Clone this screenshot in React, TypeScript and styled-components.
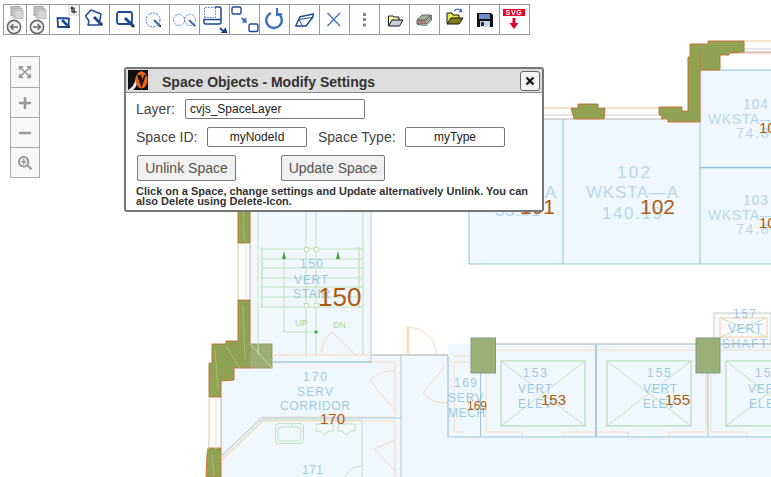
import React from "react";
import styled, { createGlobalStyle } from "styled-components";
import { FaExpandArrowsAlt, FaPlus, FaMinus, FaSearchPlus } from "react-icons/fa";

const GlobalStyle = createGlobalStyle`
  html, body { margin: 0; padding: 0; background: #fff; overflow: hidden; }
  body { font-family: "Liberation Sans", Arial, sans-serif; }
  * { box-sizing: border-box; }
`;

const Page = styled.div`
  position: relative;
  width: 771px;
  height: 477px;
  overflow: hidden;
  padding: 4px 0 0 3px;
`;

const Toolbar = styled.div`
  position: relative;
  display: inline-flex;
  height: 31px;
  border: 1px solid #999;
  border-right: 0;
  background: #fff;
`;

const Tool = styled.div<{ $narrow?: boolean }>`
  width: ${(p) => (p.$narrow ? 23 : 30)}px;
  height: 29px;
  border-right: 1px solid #999;
  flex: none;
  svg { display: block; }
`;

const PlanCanvas = styled.svg`
  position: absolute;
  left: 0;
  top: 0;
`;

const CadText = styled.text<{ $size?: number }>`
  font-family: "Liberation Sans", Arial, sans-serif;
  font-size: ${(p) => p.$size ?? 12}px;
  fill: ${(p) => ((p.$size ?? 12) > 13 ? "#a2cde6" : "#6eb3d9")};
  fill-opacity: ${(p) => ((p.$size ?? 12) > 13 ? 0.75 : 0.68)};
`;

const RoomNumber = styled.text<{ $size: number }>`
  font-family: "Liberation Sans", Arial, sans-serif;
  font-size: ${(p) => p.$size}px;
  fill: #b05a10;
`;

const FixtureText = styled.text`
  font-family: "Liberation Sans", Arial, sans-serif;
  font-size: 9px;
  fill: #a7d79a;
`;

const SvgBadgeText = styled.text`
  font-family: "Liberation Sans", Arial, sans-serif;
  font-size: 7px;
  font-weight: bold;
  letter-spacing: 0.8px;
  fill: #fff;
`;

const ZoomBar = styled.div`
  position: absolute;
  left: 10px;
  top: 56px;
  width: 30px;
  border: 1px solid #aaa;
  background: #f8f8f8;
`;

const ZoomBtn = styled.div`
  height: 30px;
  display: flex;
  align-items: center;
  justify-content: center;
  color: #999;
  font-size: 14px;
  & + & { border-top: 1px solid #aaa; }
`;

const Dialog = styled.div`
  position: absolute;
  left: 124px;
  top: 67px;
  width: 420px;
  height: 145px;
  border: 2px solid #777;
  border-radius: 3px;
  background: #fff;
  color: #444;
`;

const DialogHeader = styled.div`
  height: 24px;
  background: #ddd;
  border-bottom: 1px solid #888;
  display: flex;
  align-items: center;
  padding: 0 2px 0 2px;
`;

const Logo = styled.svg`
  flex: none;
  margin-top: -2px;
`;

const Title = styled.div`
  flex: 1;
  margin-left: 14px;
  margin-top: 3px;
  font-size: 14px;
  font-weight: bold;
  color: #333;
`;

const CloseBtn = styled.div`
  width: 20px;
  height: 20px;
  margin-top: 1px;
  border: 1px solid #666;
  border-radius: 3px;
  background: #f4f4f4;
  display: flex;
  align-items: center;
  justify-content: center;
`;

const DialogBody = styled.div`
  padding: 6px 0 0 10px;
`;

const FieldRow = styled.div`
  display: flex;
  align-items: center;
  height: 19px;
  margin-bottom: 9px;
  font-size: 14px;
`;

const FieldLabel = styled.span<{ $w: number; $gap?: number }>`
  width: ${(p) => p.$w}px;
  margin-left: ${(p) => p.$gap ?? 0}px;
  flex: none;
`;

const FieldInput = styled.div<{ $w: number; $center?: boolean }>`
  width: ${(p) => p.$w}px;
  height: 20px;
  flex: none;
  border: 1px solid #777;
  border-radius: 2px;
  font-size: 12px;
  line-height: 18px;
  color: #222;
  padding: 0 4px;
  text-align: ${(p) => (p.$center ? "center" : "left")};
`;

const ButtonRow = styled.div`
  display: flex;
  gap: 45px;
  margin-left: 1px;
`;

const ActionBtn = styled.div<{ $w: number }>`
  width: ${(p) => p.$w}px;
  height: 26px;
  border: 1px solid #777;
  border-radius: 2px;
  background: #f0f0f0;
  color: #555;
  font-size: 14px;
  line-height: 25px;
  text-align: center;
`;

const Note = styled.div`
  margin-top: 5px;
  width: 400px;
  font-size: 11px;
  line-height: 10px;
  font-weight: bold;
  color: #333;
`;

const NAVY = "#1d4a94";
const BLUE = "#3f72b8";

const Ico = ({ w = 29, children }: { w?: number; children: React.ReactNode }) => (
  <svg width={w} height={29} viewBox={`0 0 ${w} 29`}>
    {children}
  </svg>
);

const Pencil = ({ x, y, s = 1, c = NAVY }: { x: number; y: number; s?: number; c?: string }) => (
  <g transform={`translate(${x} ${y}) scale(${s})`}>
    <path d="M0 0 L7 7" stroke={c} strokeWidth={2.6} />
    <path d="M5.5 7.5 L8 8 L7.5 5.5Z" fill="#222" />
  </g>
);

const PagesBack = ({ dir }: { dir: "l" | "r" }) => (
  <Ico w={22}>
    <rect x="7" y="1.5" width="9" height="9" fill="#c4c4c4" stroke="#a8a8a8" />
    <rect x="9" y="3.5" width="9" height="9" fill="#d0d0d0" stroke="#b4b4b4" />
    <rect x="11" y="5.5" width="8" height="8" fill="#d8d8d8" stroke="#bbb" />
    <circle cx="10" cy="22" r="6.6" fill="#f4f4f4" stroke="#666" strokeWidth="1.6" />
    {dir === "l" ? (
      <path d="M14 22 H6.5 M9.5 19 L6.5 22 L9.5 25" fill="none" stroke="#666" strokeWidth="1.3" />
    ) : (
      <path d="M6 22 H13.5 M10.5 19 L13.5 22 L10.5 25" fill="none" stroke="#666" strokeWidth="1.3" />
    )}
  </Ico>
);

const icons: React.ReactNode[] = [
  <PagesBack dir="l" />,
  <PagesBack dir="r" />,
  <Ico>
    <rect x="19" y="0" width="10" height="10" fill="#fff" stroke="#ccc" />
    <path d="M22 1.5 V7 H27 M24 8.5 V3 H20.5" fill="none" stroke="#111" strokeWidth="1.2" />
    <path d="M7.5 13 L19 13.5 L18.5 22 L8 22Z" fill="#fff" stroke={NAVY} strokeWidth="1.8" strokeLinejoin="round" />
    <Pencil x={12} y={15} />
  </Ico>,
  <Ico>
    <path d="M5.5 11 L9 16 L8 20 L19 20 L21 9 L11 5Z" fill="#fff" stroke={NAVY} strokeWidth="1.5" strokeLinejoin="round" />
    <Pencil x={14} y={12} s={1.1} />
  </Ico>,
  <Ico>
    <rect x="7" y="7" width="15" height="12" rx="2" fill="#fff" stroke={NAVY} strokeWidth="1.8" />
    <Pencil x={15} y={13} s={1.2} />
  </Ico>,
  <Ico>
    <circle cx="13" cy="15" r="7" fill="#fff" stroke={BLUE} strokeWidth="1" strokeDasharray="2 1" />
    <Pencil x={14} y={15} s={0.9} c={BLUE} />
  </Ico>,
  <Ico>
    <circle cx="9" cy="15" r="5.5" fill="none" stroke={BLUE} strokeOpacity=".8" strokeWidth="1" strokeDasharray="2 1" />
    <circle cx="20" cy="15" r="5.5" fill="none" stroke={BLUE} strokeOpacity=".8" strokeWidth="1" strokeDasharray="2 1" />
    <Pencil x={19} y={15} s={0.8} c={BLUE} />
  </Ico>,
  <Ico>
    <path d="M4.5 12.5 V2.5 H15.5 V12.5 H4.5" fill="none" stroke="#5b7cb8" strokeDasharray="1.5 1.2" />
    <path d="M15 2 H19.5 Q21 2 21 3.5 V17.5 Q21 19 19.5 19 H5.5 Q4 19 4 17.5 V14.5 H21" fill="none" stroke={NAVY} strokeWidth="1.5" />
    <path d="M20 22 L23.5 25 L25.5 22.5 L27.5 28 L20.5 28 L22.5 26.5 L19.5 24Z" fill="#0f3c86" />
  </Ico>,
  <Ico>
    <rect x="2" y="2" width="9" height="7" rx="1.5" fill="#fff" stroke={NAVY} strokeWidth="1.4" />
    <path d="M11.5 12 L14.5 14 L16 12 L17 18 L11.5 17.5 L13 16 L11.5 14Z" fill={BLUE} />
    <rect x="19" y="19" width="9" height="7.5" rx="1.5" fill="#fff" stroke={NAVY} strokeWidth="1.4" />
  </Ico>,
  <Ico>
    <path d="M11 8 A7.8 7.8 0 1 0 18 8.5" fill="none" stroke={BLUE} strokeWidth="2.4" />
    <path d="M17 3 L17 10 L22 9" fill="none" stroke={BLUE} strokeWidth="2" />
  </Ico>,
  <Ico>
    <path d="M5.7 21 L10 11.7 L23.3 9 L22.7 12.3 L16 21Z" fill="#fff" stroke={NAVY} strokeWidth="1.5" strokeLinejoin="round" />
    <path d="M9 14.5 L22.7 12.3 M9 14.5 L12.5 21" fill="none" stroke={NAVY} strokeWidth="1" />
  </Ico>,
  <Ico>
    <path d="M7.5 8 L20 21 M20 8 L7.5 21" stroke={BLUE} strokeWidth="1.3" />
  </Ico>,
  <Ico>
    <rect x="13" y="8" width="3" height="3" fill="#888" />
    <rect x="13" y="13" width="3" height="3" fill="#888" />
    <rect x="13" y="18.5" width="3" height="3" fill="#888" />
  </Ico>,
  <Ico>
    <path d="M8.5 20 V11 H13 L14 12 H19 V15" fill="#ffffb0" stroke="#111" strokeWidth="1" />
    <path d="M8.5 21 L12 15 H23 L19.5 21Z" fill="#c6cfdc" stroke="#111" strokeWidth="1" />
  </Ico>,
  <Ico>
    <path d="M7 15 L12 10 H21 V14 L16 19 H7Z" fill="#a9aca2" stroke="#666" />
    <path d="M7 15 H16 L21 10" fill="none" stroke="#555" />
    <path d="M7 16.5 H16 M7 18 H16" stroke="#b45a5a" strokeWidth=".8" />
    <path d="M7 19.5 L16 20.5 L21.5 15.5 V10" fill="none" stroke="#558060" strokeWidth="1" />
  </Ico>,
  <Ico>
    <path d="M7 18 V8 H12 L13 10 H19 V13" fill="#e8e84a" stroke="#111" strokeWidth="1" />
    <path d="M7 19 L11 13 H23 L19 19Z" fill="#7f7f20" stroke="#111" strokeWidth="1" />
    <path d="M14 6 Q18 2 21 6 M19 7 L21.5 6.5 L21 4" fill="none" stroke="#2a5db0" strokeWidth="1.2" />
  </Ico>,
  <Ico>
    <path d="M7 8 H21 L23 10 V22 H7Z" fill="#111" />
    <rect x="9" y="9" width="11" height="5" fill="#6f8fd0" />
    <rect x="10" y="16" width="10" height="6" fill="#c8d4e8" />
    <rect x="11" y="17" width="3" height="4" fill="#333" />
  </Ico>,
  <Ico>
    <rect x="3" y="4" width="22" height="7" fill="#e4002b" />
    <SvgBadgeText x="14" y="10" textAnchor="middle">SVG</SvgBadgeText>
    <path d="M12.5 13 H15.5 V18 H18.5 L14 24 L9.5 18 H12.5Z" fill="#e4002b" />
  </Ico>,
];

type L = [string, number, number, number, number?];
const cadLabels: L[] = [
  ["102", 617, 178, 33, 17],
  ["WKSTA—A", 586, 198, 92, 17],
  ["140.19", 602, 219, 60, 17],
  ["101", 500, 178, 33, 17],
  ["WKSTA—A", 464, 198, 92, 17],
  ["33.51", 495, 216, 45, 17],
  ["104", 743, 109, 25, 14],
  ["WKSTA—T", 708, 124, 75, 14],
  ["74.85", 736, 138, 42, 14],
  ["103", 743, 205, 25, 14],
  ["WKSTA—T", 708, 220, 75, 14],
  ["74.85", 736, 234, 42, 14],
  ["150", 300, 268, 23, 12],
  ["VERT", 294, 284, 34, 12],
  ["STAIR", 293, 298, 37, 12],
  ["170", 303, 381, 24, 12],
  ["SERV", 297, 396, 36, 12],
  ["CORRIDOR", 280, 410, 70, 12],
  ["171", 302, 474, 21, 12],
  ["169", 454, 387, 23, 12],
  ["SERV", 448, 402, 35, 12],
  ["MECH", 448, 417, 37, 12],
  ["153", 523, 377, 24, 12],
  ["VERT", 518, 393, 34, 12],
  ["ELEV", 518, 408, 34, 12],
  ["155", 647, 377, 24, 12],
  ["VERT", 643, 393, 34, 12],
  ["ELEV", 643, 408, 32, 12],
  ["157", 733, 318, 23, 12],
  ["VERT", 728, 333, 34, 12],
  ["SHAFT", 722, 348, 45, 12],
  ["159", 755, 377, 24, 12],
  ["VERT", 748, 393, 34, 12],
  ["ELEV", 749, 408, 34, 12],
];

const numbers: [string, number, number, number][] = [
  ["102", 640, 214, 21],
  ["101", 520, 214, 21],
  ["104", 759, 133, 15],
  ["103", 759, 228, 15],
  ["150", 318, 306, 26],
  ["170", 320, 424, 15],
  ["169", 467, 410, 12],
  ["153", 541, 405, 15],
  ["155", 665, 405, 15],
];

const WALL = "#8fa352";
const WALL_EDGE = "#c9733a";
const TEAL = "#8fc4d8";
const GREEN = "#c4e2c0";
const ORANGE = "#f8dcc2";
const TAN = "#e2c99c";
const GREY = "#c3c9c6";
const ROOM = "#f0f7fd";

const treads = [249, 259, 268, 278, 287, 297, 307];

const FloorPlan = () => (
  <PlanCanvas width={771} height={477} viewBox="0 0 771 477">
    {/* floor fills */}
    <path d="M469 119 H700 V70 H771 V264 H469Z" fill={ROOM} />
    <path d="M250 190 H371 V355 H448 V344 H771 V477 H221 V363 H250Z" fill={ROOM} />
    <rect x="714" y="313" width="57" height="31" fill="#f6fafd" stroke={GREY} />

    {/* exterior wall strips top */}
    <g fill="none">
      <path d="M543 108 H571 M605 108 H659 M744 41 H771" stroke={TAN} />
      <path d="M543 115 H574 M603 115 H660 M744 49 H771" stroke="#dedede" strokeWidth="1.5" />
      <path d="M469 119 H574 M604 119 H664 M744 52 H771" stroke="#b5b5b5" />
      <path d="M729 53 H771" stroke="#e9b091" />
    </g>

    {/* top room lines */}
    <g fill="none" stroke={TEAL}>
      <path d="M563 119 V264 M700 70 V264 M469 264 H771 M700 70 H771 M469 200 V264" />
      <path d="M700 167.5 H771" strokeWidth="1.5" />
    </g>

    {/* olive walls */}
    <g fill={WALL} stroke={WALL_EDGE} strokeWidth="1">
      <path d="M571 108 H578 V104 H598 V108 H605 L604 119 H574Z" />
      <path d="M659 107 H682 V111 H688 V57 H690 V44 H708 V41 H744 V52 L729 53 V55 H720 V70 H700 V122 H668 V119 H662 L661 115 H659Z" />
      <path d="M700 55 V70" fill="none" />
      <path d="M238 190 H250 V243 H238Z" />
      <path d="M238 300 H250 V368 H234 V380 L221 381 V397 H209 V363 H212 V344 H226 V341 H238Z" />
      <path d="M208 448 H221 V477 H206 L207 455Z" />
    </g>
    <g fill="none" stroke="#d9e2b5" strokeWidth=".5" opacity=".7">
      <path d="M243 200 L244 240 M243 305 L245 360 M215 350 L218 390 M226 346 L240 368 M212 455 L214 476" />
    </g>
    <rect x="250" y="344" width="22" height="24" fill="#9cae72" stroke="#9c9b70" />
    <path d="M250 344 L272 368" stroke="#d5dfc0" strokeWidth=".7" />

    {/* windows left */}
    <g fill="none">
      <path d="M238 243 V300" stroke="#d8cf90" />
      <path d="M246 243 V300" stroke="#ddd" />
      <path d="M250 243 V300" stroke="#bdb0ab" />
      <path d="M209 397 V449" stroke="#d8cf90" />
      <path d="M216 397 V449" stroke="#ddd" />
      <path d="M221 397 V449" stroke="#bdb0ab" />
    </g>

    {/* stair */}
    <g fill="none" stroke={GREEN}>
      <path d="M258 212 V355 M306 212 V355 M316 212 V355" />
      <path d="M363 212 V355" stroke="#cfdcb0" />
      <path d="M371 212 V362" stroke={GREY} />
      {treads.map((y) => (
        <path key={y} d={`M262 ${y} H363`} />
      ))}
      <path d="M262 247 V308 M359 247 V308" strokeWidth="1.5" />
      <path d="M284 259 V332 H316" />
      <rect x="304.5" y="247.5" width="4" height="4" fill="#fff" />
      <rect x="314.5" y="247.5" width="4" height="4" fill="#fff" />
      <rect x="304.5" y="303.5" width="4" height="4" fill="#fff" />
      <rect x="314.5" y="303.5" width="4" height="4" fill="#fff" />
    </g>
    <path d="M284 251 L286 259 H282Z M338 251 L340 259 H336Z" fill="#3aa43a" />
    <circle cx="316" cy="332" r="1.7" fill="#3fb44a" />
    <FixtureText x="295" y="326">UP</FixtureText>
    <FixtureText x="333" y="328">DN</FixtureText>

    {/* doors, corridor */}
    <g fill="none" stroke={ORANGE}>
      <path d="M322 355 A24 24 0 0 1 332 332 L357 356" />
      <path d="M272 355 H371 M371 362 H395 V417 H261 L221 458" />
      <path d="M221 462 L263 421 H395 M395 421 V477" />
      <path d="M395 371 A30 30 0 0 0 370 381 L395 410" />
      <path d="M448 362 L423 393 Q433 404 448 403" />
      <path d="M395 440 L374 449 L395 471" />
      <path d="M407 355 V327 A30 30 0 0 1 437 355" />
      <path d="M403 355 H448" />
    </g>
    <path d="M408 327 V355" stroke={ORANGE} strokeWidth="2" />
    <path d="M272 362 H371" stroke="#a4c8da" strokeWidth="1.5" />
    <path d="M371 355 H448" stroke={GREY} strokeWidth="1.5" />
    <path d="M221 456 L262 418 H401 M401 355 V477" fill="none" stroke="#a4cde0" />
    <path d="M221 460 L263 420 H362" fill="none" stroke="#cfdcb0" />

    {/* fixtures */}
    <g fill="none" stroke={GREEN}>
      <rect x="275.5" y="423.5" width="28" height="20" rx="3" />
      <rect x="278" y="427" width="23" height="14" rx="3" />
      <path d="M288 423 V427 M292 423 V427" />
      <path d="M316 424 H333 V431 H329 L324.5 435 L320 431 H316Z" />
      <path d="M338 424 H355 V431 H351 L346.5 435 L342 431 H338Z" />
      <path d="M362 421 V477" />
      <path d="M345 477 A20 20 0 0 1 362 466" />
    </g>

    {/* lower rooms */}
    <g fill="none" stroke={ORANGE}>
      <path d="M453 356 H470 M454 362 H470 M454 362 V432 H463" />
      <path d="M486 373 V432 H522 V437 M563 437 V432 H628 V437 M669 437 V432 H706 V373" />
      <path d="M496 350 H696 M720 350 H771" />
      <path d="M711 373 V432 H747 V437" />
    </g>
    <g fill="none" stroke="#9cc5d4">
      <path d="M448 356 V437 H771" strokeWidth="1.2" />
      <path d="M480.5 373 V437 M708 373 V437" />
    </g>
    <path d="M596 344 V437" stroke="#a3cdd9" strokeWidth="2" fill="none" />
    <path d="M496 344 H696 M720 344 H771" stroke={GREY} strokeWidth="1.5" fill="none" />

    {[501, 607, 726].map((x) => (
      <g key={x} fill="none" stroke={GREEN}>
        <rect x={x} y="361" width="84" height="65" strokeWidth="1.5" />
        <path d={`M${x} 361 L${x + 84} 426 M${x + 84} 361 L${x} 426`} />
      </g>
    ))}

    {/* shaft */}
    <rect x="720" y="318" width="47" height="19" fill="none" stroke={ORANGE} strokeWidth="1.5" />
    <path d="M720 318 L767 337 M767 318 L720 337" stroke={GREEN} fill="none" />

    {/* pillars */}
    <rect x="471" y="338" width="24.5" height="35" fill="#9bb075" stroke="#7f9a8f" />
    <rect x="696" y="338" width="24" height="35" fill="#9bb075" stroke="#7f9a8f" />

    {cadLabels.map(([t, x, y, w, s], i) => (
      <CadText key={i} x={x} y={y} $size={s} textLength={w} lengthAdjust="spacing">
        {t}
      </CadText>
    ))}
    {numbers.map(([t, x, y, s]) => (
      <RoomNumber key={t} x={x} y={y} $size={s}>
        {t}
      </RoomNumber>
    ))}
  </PlanCanvas>
);

export default function App() {
  return (
    <Page>
      <GlobalStyle />
      <FloorPlan />
      <Toolbar>
        {icons.map((ic, i) => (
          <Tool key={i} $narrow={i < 2}>
            {ic}
          </Tool>
        ))}
      </Toolbar>
      <ZoomBar>
        <ZoomBtn><FaExpandArrowsAlt /></ZoomBtn>
        <ZoomBtn><FaPlus /></ZoomBtn>
        <ZoomBtn><FaMinus /></ZoomBtn>
        <ZoomBtn><FaSearchPlus /></ZoomBtn>
      </ZoomBar>
      <Dialog>
        <DialogHeader>
          <Logo width="20" height="20" viewBox="0 0 20 20">
            <rect width="20" height="20" fill="#111" />
            <path d="M0 20 Q6 17 8 8 Q9 3 14 1 Q10 6 9 13 Q8 18 5 20Z" fill="#e9e9e9" />
            <ellipse cx="13.5" cy="10" rx="6" ry="8.5" fill="#e8641a" />
            <path d="M10 5 L13.5 15 L17 5 M12 5 L14 11" fill="none" stroke="#111" strokeWidth="1.8" />
          </Logo>
          <Title>Space Objects - Modify Settings</Title>
          <CloseBtn>
            <svg width="10" height="10" viewBox="0 0 10 10">
              <path d="M1.5 1.5 L8.5 8.5 M8.5 1.5 L1.5 8.5" stroke="#111" strokeWidth="2.2" />
            </svg>
          </CloseBtn>
        </DialogHeader>
        <DialogBody>
          <FieldRow>
            <FieldLabel $w={49}>Layer:</FieldLabel>
            <FieldInput $w={180}>cvjs_SpaceLayer</FieldInput>
          </FieldRow>
          <FieldRow>
            <FieldLabel $w={71}>Space ID:</FieldLabel>
            <FieldInput $w={100} $center>myNodeId</FieldInput>
            <FieldLabel $w={87} $gap={11}>Space Type:</FieldLabel>
            <FieldInput $w={100} $center>myType</FieldInput>
          </FieldRow>
          <ButtonRow>
            <ActionBtn $w={99}>Unlink Space</ActionBtn>
            <ActionBtn $w={104}>Update Space</ActionBtn>
          </ButtonRow>
          <Note>
            Click on a Space, change settings and Update alternatively Unlink. You can also Delete using Delete-Icon.
          </Note>
        </DialogBody>
      </Dialog>
    </Page>
  );
}
